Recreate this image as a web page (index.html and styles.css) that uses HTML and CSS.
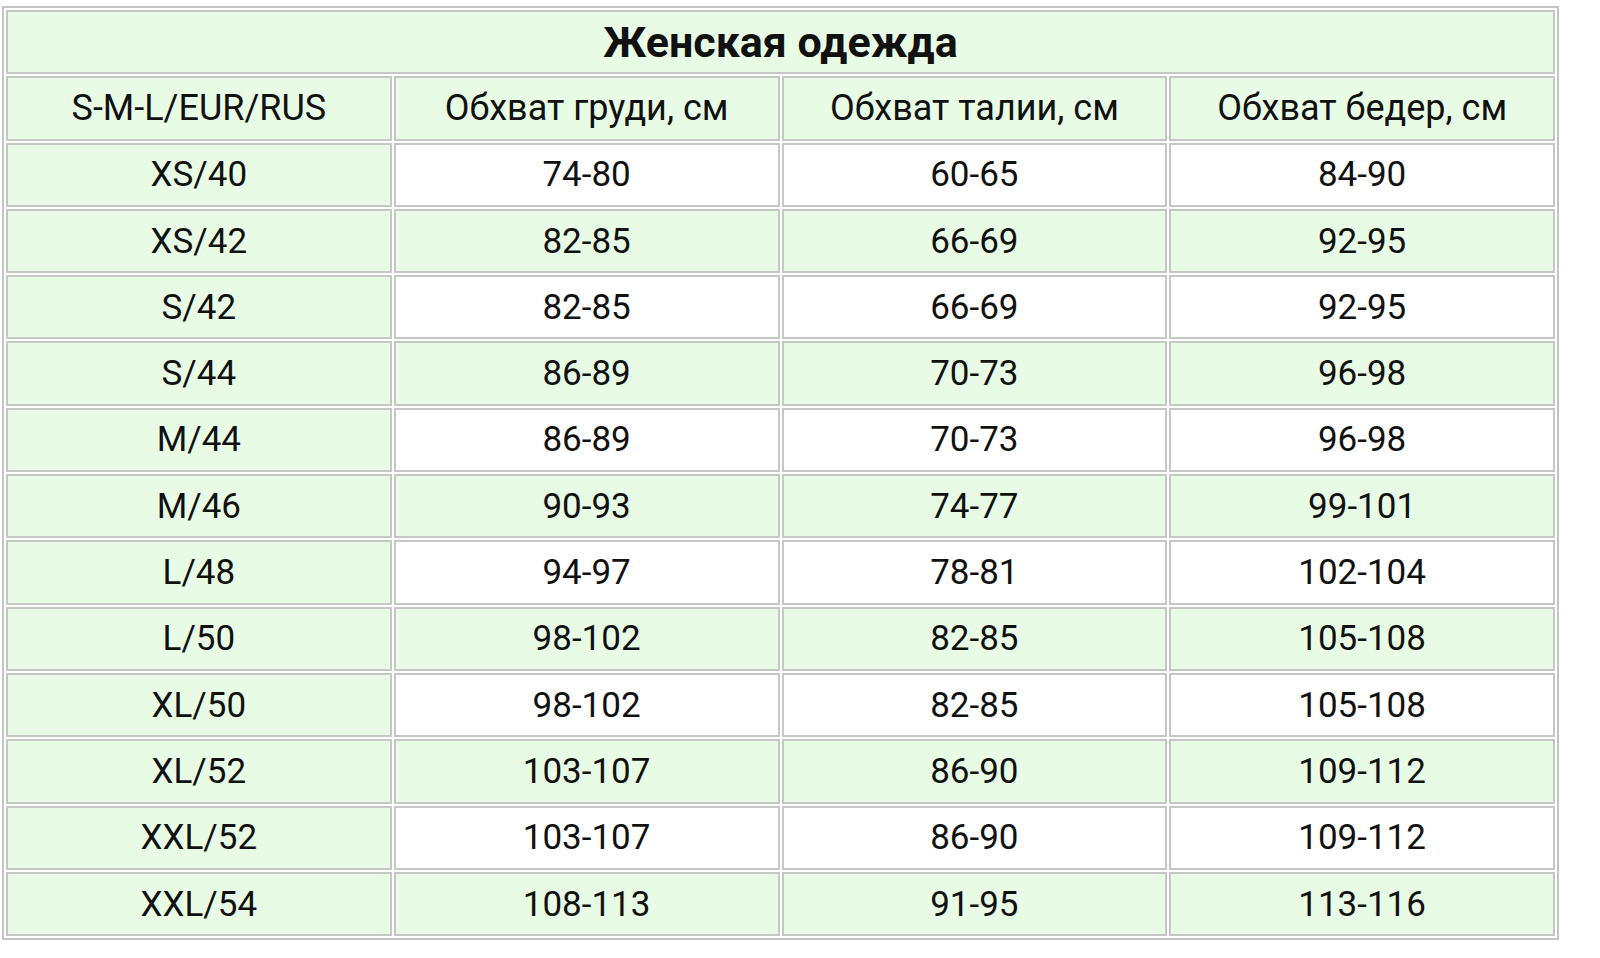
FILE: index.html
```html
<!DOCTYPE html>
<html lang="ru">
<head>
<meta charset="utf-8">
<title>Женская одежда</title>
<link rel="stylesheet" href="styles.css">
</head>
<body>
<table class="sizes">
  <tr><th class="title" colspan="4">Женская одежда</th></tr>
  <tr class="head">
    <td class="g">S-M-L/EUR/RUS</td>
    <td class="g">Обхват груди, см</td>
    <td class="g">Обхват талии, см</td>
    <td class="g">Обхват бедер, см</td>
  </tr>
  <tr><td class="g">XS/40</td><td>74-80</td><td>60-65</td><td>84-90</td></tr>
  <tr class="alt"><td class="g">XS/42</td><td>82-85</td><td>66-69</td><td>92-95</td></tr>
  <tr><td class="g">S/42</td><td>82-85</td><td>66-69</td><td>92-95</td></tr>
  <tr class="alt"><td class="g">S/44</td><td>86-89</td><td>70-73</td><td>96-98</td></tr>
  <tr><td class="g">M/44</td><td>86-89</td><td>70-73</td><td>96-98</td></tr>
  <tr class="alt"><td class="g">M/46</td><td>90-93</td><td>74-77</td><td>99-101</td></tr>
  <tr><td class="g">L/48</td><td>94-97</td><td>78-81</td><td>102-104</td></tr>
  <tr class="alt"><td class="g">L/50</td><td>98-102</td><td>82-85</td><td>105-108</td></tr>
  <tr><td class="g">XL/50</td><td>98-102</td><td>82-85</td><td>105-108</td></tr>
  <tr class="alt"><td class="g">XL/52</td><td>103-107</td><td>86-90</td><td>109-112</td></tr>
  <tr><td class="g">XXL/52</td><td>103-107</td><td>86-90</td><td>109-112</td></tr>
  <tr class="alt"><td class="g">XXL/54</td><td>108-113</td><td>91-95</td><td>113-116</td></tr>
</table>
</body>
</html>
```

FILE: styles.css
```css
html, body {
  margin: 0;
  padding: 0;
  background: #ffffff;
}

.sizes {
  margin: 6px 0 0 2px;
  width: 1557px;
  table-layout: fixed;
  border-collapse: separate;
  border-spacing: 2px;
  border: 2px solid #c4c4c4;
  font-family: Roboto, "Liberation Sans", sans-serif;
  color: #111111;
}

.sizes td,
.sizes th {
  height: 60.3px;
  padding: 0;
  border: 2px solid #c6c6c6;
  text-align: center;
  vertical-align: middle;
  background: #ffffff;
  font-size: 35px;
  font-weight: 400;
}

.sizes th.title {
  background: #e7fbe5;
  font-size: 43px;
  font-weight: 700;
}

.sizes td.g,
.sizes tr.alt td {
  background: #e7fbe5;
}

.sizes tr.head td {
  font-size: 36px;
}
```
